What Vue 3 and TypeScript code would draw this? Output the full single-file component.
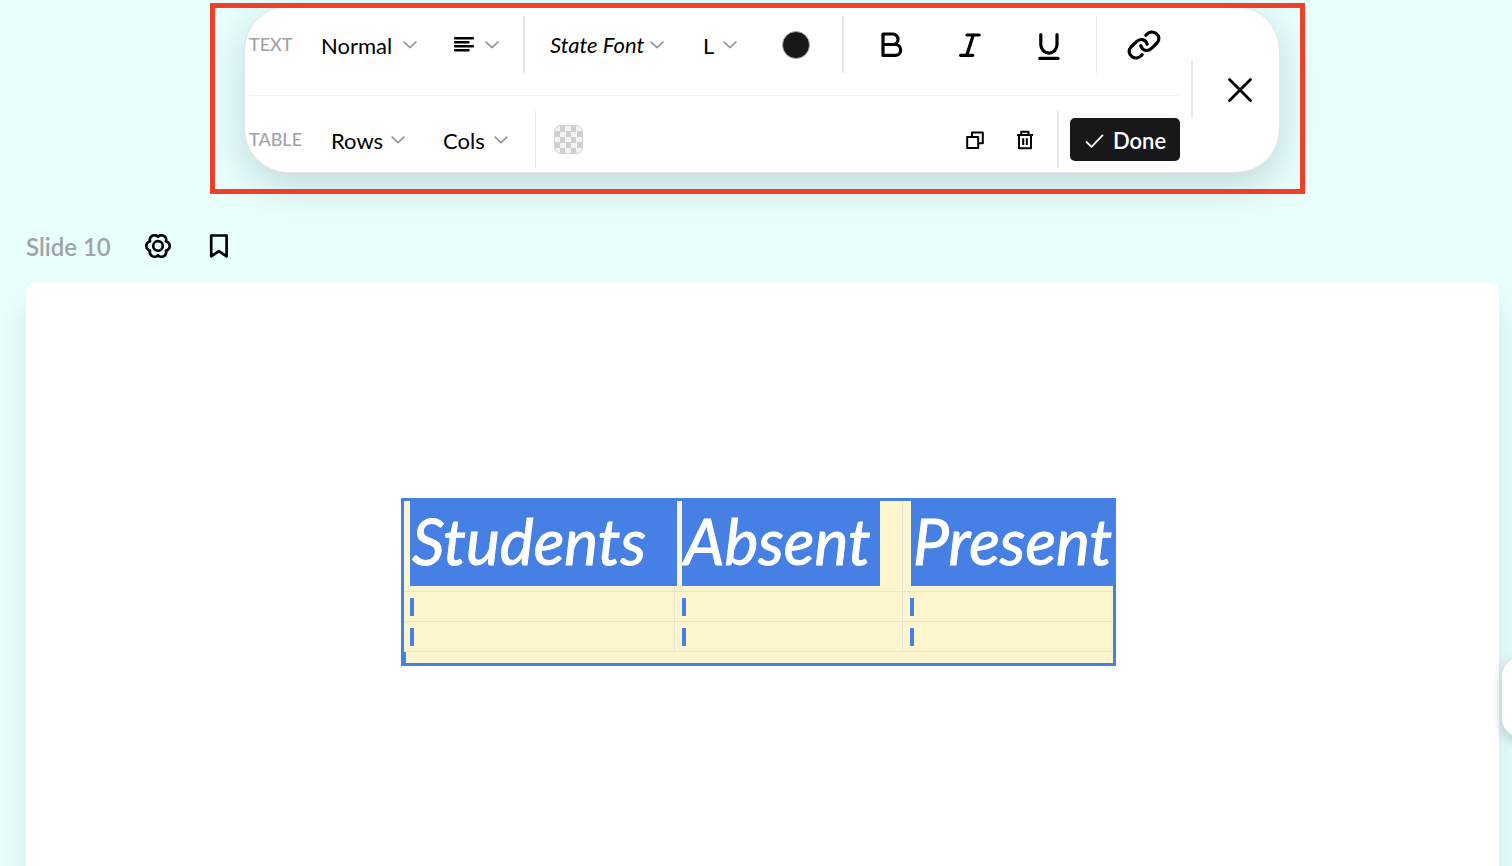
<script setup lang="ts">
import { ref } from 'vue'

const textStyle = ref('Normal')
const fontName = ref('State Font')
const fontSize = ref('L')

const styles = ['Normal', 'Heading', 'Title']
const fonts = ['State Font', 'Sofia', 'Serif']
const sizes = ['S', 'M', 'L', 'XL']

const headings = ['Students', 'Absent', 'Present']
const blankRows = [1, 2]

// Six broad lobes with narrow notches between them
function gearOutline(base: number, depth: number): string {
  const points: string[] = []
  for (let deg = 0; deg < 360; deg += 5) {
    const a = (deg * Math.PI) / 180
    const r = base + depth * Math.pow(Math.abs(Math.cos(3 * a)), 0.8)
    points.push(`${(14 + r * Math.cos(a)).toFixed(2)} ${(14 + r * Math.sin(a)).toFixed(2)}`)
  }
  return `M${points.join('L')}Z`
}

const gearPath = gearOutline(9.2, 2.5)
</script>

<template>
  <div class="page">
    <header class="top">
      <div class="frame">
        <div class="toolbar" role="toolbar" aria-label="Formatting">
          <div class="rows">
            <div class="row row-text">
              <span class="caption caption-text">TEXT</span>
              <label class="drop drop-style">
                <select v-model="textStyle" aria-label="Text style">
                  <option v-for="s in styles" :key="s">{{ s }}</option>
                </select>
                <svg class="chev" viewBox="0 0 14 8"><path d="M1.2 1.2L7 6.6L12.8 1.2" /></svg>
              </label>
              <button class="drop align" aria-label="Alignment" aria-haspopup="menu">
                <svg class="lines" viewBox="0 0 20 16">
                  <path d="M1 1.2H19M1 5.2H14.5M1 9.2H19M1 13.2H14.5" />
                </svg>
                <svg class="chev" viewBox="0 0 14 8"><path d="M1.2 1.2L7 6.6L12.8 1.2" /></svg>
              </button>
              <span class="rule rule-align"></span>
              <div class="group group-font">
                <label class="drop drop-font">
                  <select v-model="fontName" aria-label="Font">
                    <option v-for="f in fonts" :key="f">{{ f }}</option>
                  </select>
                  <svg class="chev" viewBox="0 0 14 8"><path d="M1.2 1.2L7 6.6L12.8 1.2" /></svg>
                </label>
                <label class="drop drop-size">
                  <select v-model="fontSize" aria-label="Text size">
                    <option v-for="s in sizes" :key="s">{{ s }}</option>
                  </select>
                  <svg class="chev" viewBox="0 0 14 8"><path d="M1.2 1.2L7 6.6L12.8 1.2" /></svg>
                </label>
                <button class="tool" aria-label="Text colour"><span class="dot"></span></button>
              </div>
              <span class="rule"></span>
              <div class="group group-marks">
                <button class="tool" aria-label="Bold">
                  <svg width="32" height="32" viewBox="0 0 32 32" stroke-width="3.2">
                    <path d="M7 5H16.8A5.2 5.2 0 0 1 16.8 15.5H7ZM7 15.5H19.2A5.4 5.4 0 0 1 19.2 26.4H7Z" />
                  </svg>
                </button>
                <button class="tool" aria-label="Italic">
                  <svg width="32" height="32" viewBox="0 0 32 32" stroke-width="3.2">
                    <path d="M13 6H25.2M6.6 26.3H18.8M19.3 6L12.7 26.3" />
                  </svg>
                </button>
                <button class="tool" aria-label="Underline">
                  <svg width="32" height="32" viewBox="0 0 32 32" stroke-width="3.2">
                    <path d="M8.8 5.5V15.5A8.1 8.6 0 0 0 25 15.5V5.5M7.8 29.4H26" />
                  </svg>
                </button>
              </div>
              <span class="rule thin"></span>
              <button class="tool link" aria-label="Insert link">
                <svg width="36" height="32" viewBox="0 0 36 32" stroke-width="3.2">
                  <path d="M19.8 6.2C23 2.5 27 2.2 29.9 4.3C33.6 7 33.8 11 31 14L25.5 19.4C22 22.7 16.5 22.3 14.8 16.8" />
                  <path d="M16.2 25.8C13 29.5 9 29.8 6.1 27.7C2.4 25 2.2 21 5 18L10.5 12.6C14 9.3 19.5 9.7 21.2 15.2" />
                </svg>
              </button>
            </div>
            <div class="row row-table">
              <span class="caption caption-table">TABLE</span>
              <button class="drop drop-rows" aria-haspopup="menu">
                <span>Rows</span>
                <svg class="chev" viewBox="0 0 14 8"><path d="M1.2 1.2L7 6.6L12.8 1.2" /></svg>
              </button>
              <button class="drop drop-cols" aria-haspopup="menu">
                <span>Cols</span>
                <svg class="chev" viewBox="0 0 14 8"><path d="M1.2 1.2L7 6.6L12.8 1.2" /></svg>
              </button>
              <span class="rule thin rule-cols"></span>
              <button class="checker" aria-label="Cell colour"></button>
              <div class="group group-actions">
                <button class="tool" aria-label="Duplicate">
                  <svg width="18" height="18" viewBox="0 0 18 18" stroke-width="2" class="sharp">
                    <path d="M1.2 6H12.2V17H1.2ZM6 6V1.5H16.8V12.2H12.2" />
                  </svg>
                </button>
                <button class="tool" aria-label="Delete">
                  <svg width="18" height="20" viewBox="0 0 18 20" stroke-width="2" class="sharp">
                    <path d="M1 5H17M3 5V18.2H15V5M5.2 5V1.8H12.5V5M7.2 8.2V15M10.8 8.2V15" />
                  </svg>
                </button>
              </div>
              <span class="rule"></span>
              <button class="done">
                <svg width="20" height="18" viewBox="0 0 20 18" stroke-width="1.8">
                  <path d="M2.5 11L7.5 15.8L18.5 4.4" />
                </svg>
                <span>Done</span>
              </button>
            </div>
          </div>
          <span class="rule"></span>
          <button class="close" aria-label="Close">
            <svg width="26" height="26" viewBox="0 0 26 26" stroke-width="2.8">
              <path d="M2.5 2.5L23.5 23.5M23.5 2.5L2.5 23.5" />
            </svg>
          </button>
        </div>
      </div>
    </header>

    <main class="editor">
      <div class="slide-head">
        <h1>Slide 10</h1>
        <button class="tool" aria-label="Slide settings">
          <svg width="28" height="28" viewBox="0 0 28 28" stroke-width="2.7">
            <path :d="gearPath" />
            <circle cx="14" cy="14" r="4.8" />
          </svg>
        </button>
        <button class="tool bookmark" aria-label="Bookmark slide">
          <svg width="20" height="26" viewBox="0 0 20 26" stroke-width="2.7">
            <path d="M2.2 2.5H17.6V23.3L9.9 18.2L2.2 23.3Z" />
          </svg>
        </button>
      </div>
      <section class="slide">
        <div class="table-box">
          <table>
            <thead>
              <tr>
                <th v-for="h in headings" :key="h" scope="col">
                  <span class="marked">{{ h }}</span>
                </th>
              </tr>
            </thead>
            <tbody>
              <tr v-for="r in blankRows" :key="r">
                <td v-for="h in headings" :key="h"><span class="sliver"></span></td>
              </tr>
            </tbody>
          </table>
          <div class="table-end"></div>
        </div>
      </section>
    </main>
    <aside class="side-tab"></aside>
  </div>
</template>

<style>
body {
  background: #e8fffe;
}
</style>

<style scoped>
* {
  box-sizing: border-box;
}
.page {
  position: relative;
  display: flex;
  flex-direction: column;
  height: 100vh;
  overflow: hidden;
  background: #e8fffe;
  color: #000;
  font: 22px/28px Lato, "Open Sans", sans-serif;
}
button,
select {
  margin: 0;
  padding: 0;
  border: 0;
  background: none;
  color: inherit;
  font: inherit;
  cursor: pointer;
}
svg {
  display: block;
  fill: none;
  stroke: currentColor;
  stroke-linecap: round;
  stroke-linejoin: round;
}
svg.sharp {
  stroke-linecap: butt;
}
.top {
  display: flex;
  justify-content: center;
  padding: 3px 0 0 3px;
}
.frame {
  position: relative;
  flex: 0 1 1095px;
  padding: 3px 25px 21px 34px;
}
.frame::after {
  content: "";
  position: absolute;
  inset: 0;
  border: 5px solid #ee4027;
  pointer-events: none;
}
.toolbar {
  display: flex;
  align-items: center;
  padding-left: 4px;
  border: 1px solid #e2e4e6;
  border-radius: 44px;
  background: #fff;
  box-shadow: 0 12px 40px rgba(0, 40, 40, 0.18);
}
.rows {
  flex: 1;
  margin-right: 11px;
}
.row {
  display: flex;
  align-items: center;
}
.row-text {
  padding: 9px 0 22px;
  border-bottom: 1px solid #f1f2f3;
}
.row-table {
  padding: 15px 0 4px;
}
.group {
  display: flex;
  align-items: center;
}
.rule {
  flex: none;
  width: 2px;
  height: 57px;
  background: #e6e6e8;
}
.rule.thin {
  width: 1px;
}
.caption {
  flex: none;
  padding-bottom: 1px;
  color: #a2a1a8;
  font-size: 18px;
  font-weight: 500;
}
.caption-text {
  width: 72px;
}
.caption-table {
  width: 82px;
}
.drop {
  display: grid;
  flex: none;
  align-items: center;
  text-align: left;
}
.drop > * {
  grid-area: 1 / 1;
}
.drop select,
.drop span,
.done span {
  padding-top: 2px;
}
.drop select {
  width: 100%;
  padding-right: 16px;
  appearance: none;
}
.chev {
  width: 14px;
  height: 8px;
  justify-self: end;
  stroke: #98989c;
  stroke-width: 1.8;
  pointer-events: none;
}
.drop-style {
  width: 96px;
}
.align {
  width: 45px;
  margin-left: 37px;
}
.lines {
  width: 20px;
  height: 16px;
  stroke-width: 2.4;
}
.rule-align {
  margin-left: 24px;
}
.group-font {
  gap: 39px;
  padding: 0 26px 0 25px;
}
.drop-font {
  width: 114px;
}
.drop-font select {
  padding-top: 0;
  font-style: italic;
}
.drop-size {
  width: 34px;
}
.tool {
  display: grid;
  flex: none;
  place-items: center;
  width: 40px;
  height: 40px;
}
.dot {
  width: 28px;
  height: 28px;
  border: 1px solid #a9a9ad;
  border-radius: 50%;
  background: #18181a;
}
.group-marks {
  gap: 38px;
  padding: 0 28px;
}
.link {
  margin-left: 27px;
}
.drop-rows {
  width: 74px;
}
.drop-cols {
  width: 65px;
  margin-left: 38px;
}
.rule-cols {
  margin: 0 18px 0 27px;
}
.checker {
  width: 29px;
  height: 29px;
  border: 1px solid #d2d2d4;
  border-radius: 7px;
  background: repeating-conic-gradient(#f3f3f3 0 25%, #cfcfcf 0 50%) 5px 0 / 11px 11px;
}
.group-actions {
  gap: 10px;
  margin: 0 12px 0 auto;
}
.done {
  display: flex;
  align-items: center;
  justify-content: center;
  gap: 9px;
  width: 110px;
  height: 43px;
  margin-left: 11px;
  border-radius: 5px;
  background: #18181a;
  color: #fff;
  font-weight: 600;
}
.close {
  display: grid;
  place-items: center;
  width: 86px;
  height: 57px;
  padding-left: 8px;
}
.editor {
  display: flex;
  flex: 1;
  flex-direction: column;
  padding: 36px 13px 0 26px;
}
.slide-head {
  display: flex;
  align-items: center;
  height: 32px;
  margin-bottom: 20px;
}
h1 {
  margin: 0;
  padding-top: 2px;
  width: 112px;
  color: #a0a3a6;
  font-size: 24px;
  font-weight: 600;
}
.bookmark {
  margin-left: 21px;
}
.slide {
  flex: 1;
  padding-top: 216px;
  border-radius: 10px 10px 0 0;
  background: #fff;
  box-shadow: 0 24px 32px rgba(0, 60, 60, 0.12);
}
.table-box {
  width: 715px;
  margin-left: 375px;
  border: 3px solid #4780e5;
  background: #fdf5cd;
}
.table-end {
  height: 11px;
  border-left: 2px solid #4780e5;
}
table {
  width: 100%;
  table-layout: fixed;
  border-collapse: separate;
  border-spacing: 0;
}
th,
td {
  padding: 0;
  border-right: 1px solid #e7e4d4;
  border-bottom: 1px solid #e7e4d4;
  text-align: left;
  vertical-align: top;
}
th:last-child,
td:last-child {
  border-right: 0;
}
th {
  height: 91px;
}
th:nth-child(1) {
  width: 271px;
}
th:nth-child(2) {
  width: 228px;
}
.marked {
  display: block;
  height: 85px;
  margin: 0 -3px 0 6px;
  padding-left: 2px;
  background: #4780e5;
  color: #fff;
  font: italic 400 64px/80px Lato, "Open Sans", sans-serif;
  -webkit-text-stroke: 1px #fff;
  white-space: nowrap;
}
th:nth-child(2) .marked {
  margin: 0 22px 0 7px;
}
th:nth-child(3) .marked {
  margin: 0 0 0 8px;
}
td {
  height: 30px;
  padding: 6px 0 0 6px;
}
td + td {
  padding-left: 7px;
}
.sliver {
  display: block;
  width: 4px;
  height: 18px;
  background: #4780e5;
}
.side-tab {
  position: absolute;
  top: 656px;
  right: -37px;
  width: 48px;
  height: 82px;
  border: 1px solid #dcdfe2;
  border-radius: 20px;
  background: #fff;
  box-shadow: 0 4px 12px rgba(0, 40, 40, 0.2);
}
</style>
